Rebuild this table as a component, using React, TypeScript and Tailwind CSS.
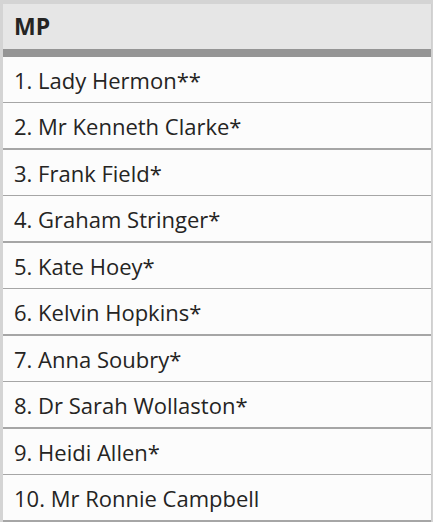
import React from 'react';

const MPS = [
  '1. Lady Hermon**',
  '2. Mr Kenneth Clarke*',
  '3. Frank Field*',
  '4. Graham Stringer*',
  '5. Kate Hoey*',
  '6. Kelvin Hopkins*',
  '7. Anna Soubry*',
  '8. Dr Sarah Wollaston*',
  '9. Heidi Allen*',
  '10. Mr Ronnie Campbell',
];

const App: React.FC = () => {
  return (
    <div
      className="w-[433px] h-[522px] overflow-hidden bg-[#d4d4d4] pt-[4px] pl-[3px] pr-[1px] text-[#252423]"
      style={{ fontFamily: '"Open Sans", "Noto Sans", sans-serif' }}
    >
      <div className="h-full bg-[#fcfcfc] border-r border-[#cfcfcf]">
        <div className="h-[45px] bg-[#e6e6e6] flex items-center pl-[11px] text-[23px] font-bold">
          MP
        </div>
        <div className="h-[8px] bg-[#959595]" />
        {MPS.map((name, i) => (
          <div
            key={name}
            className={
              i % 2 === 0
                ? 'h-[46px] flex items-center pt-[2px] pl-[11px] text-[22px] border-b border-[#a6a6a6]'
                : 'h-[47px] flex items-center pt-[2px] pl-[11px] text-[22px] border-b-2 border-[#a6a6a6]'
            }
          >
            {name}
          </div>
        ))}
      </div>
    </div>
  );
};

export default App;
